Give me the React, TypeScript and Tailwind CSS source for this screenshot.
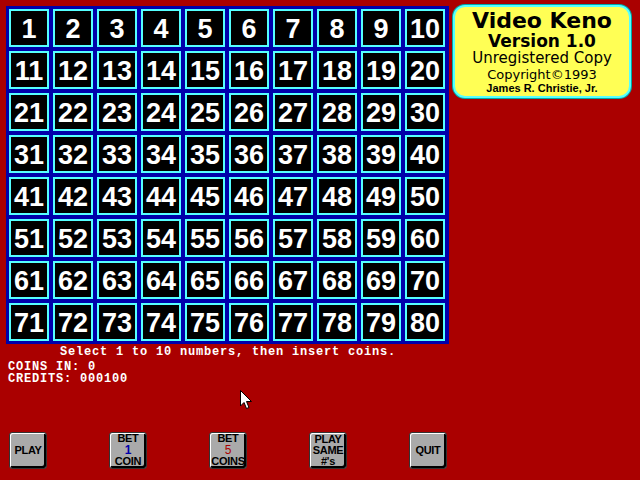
const numbers = Array.from({ length: 80 }, (_, i) => i + 1);

const KenoCell = ({ n }: { n: number }) => (
	<div className="flex h-[38px] w-[40px] items-center justify-center border-2 border-[#55ffff] bg-black pt-[3px] font-['Liberation_Sans',Arial,sans-serif] text-[27px] font-bold text-white">
		{n}
	</div>
);

const GameButton = ({ children }: { children: React.ReactNode }) => (
	<div className="flex h-[37px] w-[38px] flex-col items-center justify-center rounded-[3px] border border-[#333] bg-[#aaaaaa] pb-[1px] font-['Liberation_Sans',Arial,sans-serif] text-[11px] font-bold leading-[11px] tracking-[-0.3px] text-black shadow-[inset_1px_1px_0_#fff,inset_-2px_-2px_0_#000]">
		{children}
	</div>
);

const Cursor = () => (
	<svg
		className="absolute left-[240px] top-[390px]"
		width="13"
		height="20"
		viewBox="0 0 13 20"
	>
		<path
			d="M0.5 0.5 L0.5 16 L4 12.5 L6.5 18.5 L9 17.5 L6.5 11.5 L11.5 11.5 Z"
			fill="#fff"
			stroke="#000"
			strokeWidth="1"
		/>
	</svg>
);

export default function App() {
	return (
		<div className="relative h-[480px] w-[640px] overflow-hidden bg-[#aa0000]">
			<div className="flex items-start pl-[6px] pt-[5px]">
				<div className="mt-[1px] grid w-[443px] grid-cols-[repeat(10,40px)] gap-[4px] bg-[#0000aa] py-[3px] pl-[3px] pr-[4px]">
					{numbers.map((n) => (
						<KenoCell key={n} n={n} />
					))}
				</div>

				<div className="ml-[4px] flex h-[93px] w-[178px] flex-col items-center rounded-[12px] border-2 border-[#55ffff] bg-[#ffff55] pt-[3px] text-black shadow-[0_0_0_1px_#00aaaa]">
					<div className="font-['DejaVu_Sans',sans-serif] text-[22px] font-bold leading-[22px]">
						Video Keno
					</div>
					<div className="font-['DejaVu_Sans',sans-serif] text-[17px] font-bold leading-[18px]">
						Version 1.0
					</div>
					<div className="font-['DejaVu_Sans',sans-serif] text-[15px] leading-[17px]">
						Unregistered Copy
					</div>
					<div className="font-['DejaVu_Sans',sans-serif] text-[13px] leading-[15px]">
						Copyright©1993
					</div>
					<div className="font-['Liberation_Sans',Arial,sans-serif] text-[11px] font-bold leading-[12px]">
						James R. Christie, Jr.
					</div>
				</div>
			</div>

			<div className="font-['Liberation_Mono',monospace] text-[12px] font-bold leading-[12px] tracking-[0.8px] text-white">
				<div className="pl-[60px] pt-[2px]">
					Select 1 to 10 numbers, then insert coins.
				</div>
				<div className="pl-[8px] pt-[3px]">COINS IN: 0</div>
				<div className="pl-[8px]">CREDITS: 000100</div>
			</div>

			<div className="mt-[47px] flex gap-[62px] pl-[9px]">
				<GameButton>PLAY</GameButton>
				<GameButton>
					<span>BET</span>
					<span className="text-[12px] leading-[12px] text-[#0000aa]">1</span>
					<span>COIN</span>
				</GameButton>
				<GameButton>
					<span>BET</span>
					<span className="text-[12px] font-normal leading-[12px] text-[#aa0000]">5</span>
					<span>COINS</span>
				</GameButton>
				<GameButton>
					<span>PLAY</span>
					<span>SAME</span>
					<span>#'s</span>
				</GameButton>
				<GameButton>QUIT</GameButton>
			</div>

			<Cursor />
		</div>
	);
}
